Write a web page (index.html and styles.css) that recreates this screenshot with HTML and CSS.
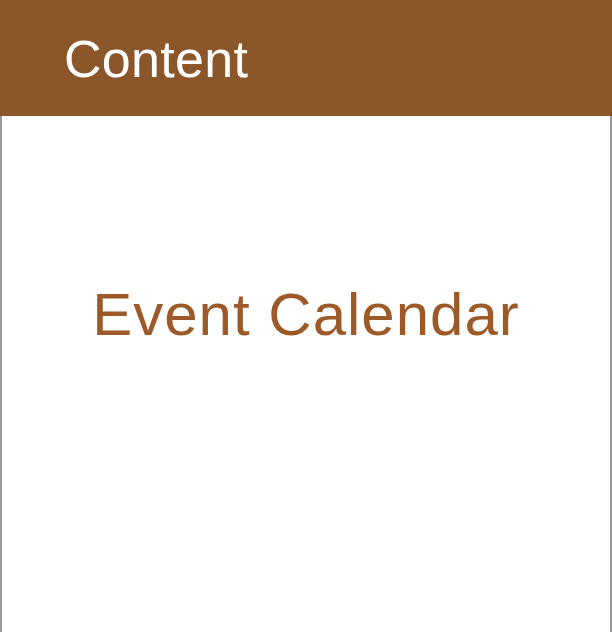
FILE: index.html
```html
<!DOCTYPE html>
<html>
<head>
<meta charset="utf-8">
<link rel="stylesheet" href="styles.css">
</head>
<body>
<header class="bar"><h1 class="bar-title">Content</h1></header>
<main class="content"><h2 class="headline">Event Calendar</h2></main>
</body>
</html>
```
FILE: styles.css
```css
html, body { margin: 0; padding: 0; background: #fff; }
body { font-family: "Liberation Sans", Arial, sans-serif; overflow: hidden; }
.bar { height: 116px; background: #8b572a; display: flex; align-items: center; padding-left: 64px; box-sizing: border-box; }
.bar-title { margin: 0; color: #fff; font-weight: normal; font-size: 52px; line-height: 1; padding-top: 2px; letter-spacing: 0.3px; }
.content { height: 516px; border-left: 2px solid #9a9a9a; border-right: 2px solid #9a9a9a; box-sizing: border-box; padding-top: 169px; }
.headline { margin: 0; text-align: center; color: #9c5a28; font-weight: normal; font-size: 60px; line-height: 1; letter-spacing: 1px; }
```
